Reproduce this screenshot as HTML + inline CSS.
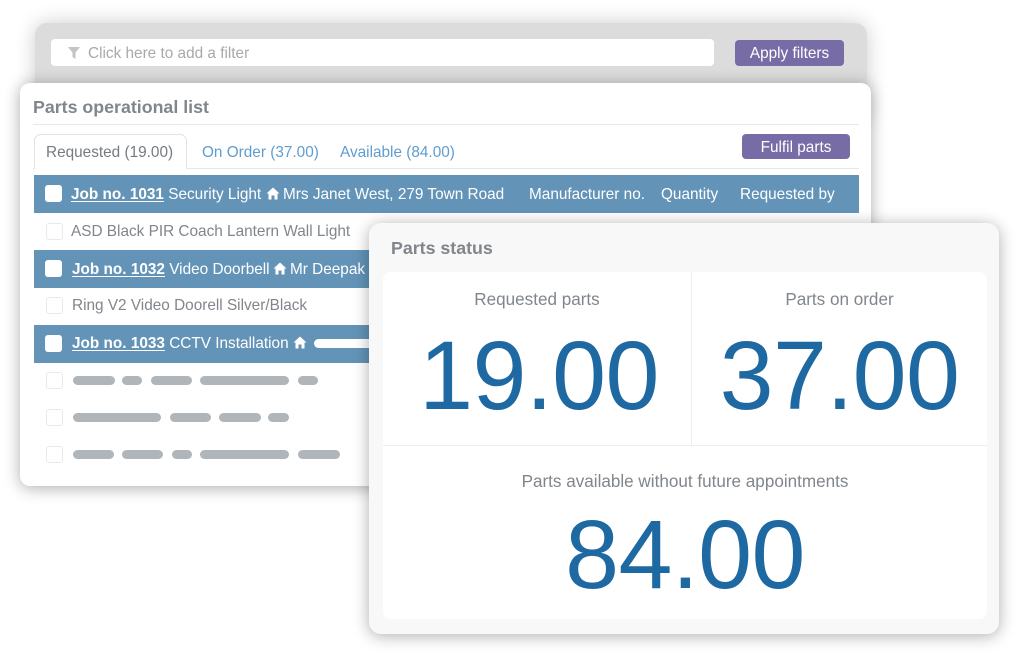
<!DOCTYPE html>
<html><head><meta charset="utf-8"><style>
html,body{margin:0;padding:0;background:#fff}
#r{position:relative;width:1024px;height:658px;overflow:hidden;background:#fff;font-family:"Liberation Sans",sans-serif;filter:blur(.35px)}
#r div,#r svg{position:absolute}
.t{position:absolute;white-space:nowrap;line-height:20px;font-size:15.35px}
.row{left:34px;width:825px;background:#6394b8}
.cb{left:45px;width:17px;height:17px;background:#fff;border-radius:3px}
.cbo{left:45.5px;width:15px;height:15px;background:#fff;border:1px solid #e8e9ea;border-radius:3px}
.w{color:#fff}.g{color:#80868c}
.bar{height:9px;background:#b0b5b9;border-radius:5px}
.btn{background:#786ca6;border-radius:4px;color:#fff;text-align:center;font-size:15.35px}
.num{color:#1f69a3;font-size:97px;line-height:100px;text-align:center;white-space:nowrap;letter-spacing:-.6px}
.lab{color:#80868c;font-size:17.1px;line-height:20px;text-align:center;white-space:nowrap}
u{text-underline-offset:2px}
</style></head><body><div id="r">

<div style="left:35px;top:23px;width:832px;height:100px;background:#dcdcdc;border-radius:12px;box-shadow:0 0 20px rgba(0,0,0,.2)"></div>
<div style="left:51px;top:39px;width:663px;height:27px;background:#fff;border-radius:4px"></div>
<svg style="left:68px;top:47px" width="12" height="12" viewBox="0 0 12 12"><path d="M0 0H12L7.5 5.5V12L4.5 10V5.5Z" fill="#c4c4c4"/></svg>
<span class="t" style="left:88px;top:44px;color:#a9a9a9">Click here to add a filter</span>
<div class="btn" style="left:735px;top:40px;width:109px;height:26px;line-height:27px">Apply filters</div>

<div style="left:20px;top:83px;width:851px;height:403px;background:#fff;border-radius:10px;box-shadow:0 2px 16px rgba(0,0,0,.32)"></div>
<span class="t" style="left:33px;top:97px;color:#80868c;font-weight:bold;font-size:17.8px">Parts operational list</span>
<div style="left:33px;top:124px;width:826px;height:1px;background:#e6e7e8"></div>
<div style="left:33px;top:168px;width:826px;height:1px;background:#e6e7e8"></div>
<div style="left:34px;top:134px;width:151px;height:34px;background:#fff;border:1px solid #e2e3e4;border-bottom:0;border-radius:7px 7px 0 0"></div>
<span class="t" style="left:46px;top:143px;color:#757b80">Requested (19.00)</span>
<span class="t" style="left:202px;top:143px;color:#5f9dd0">On Order (37.00)</span>
<span class="t" style="left:340px;top:143px;color:#5f9dd0">Available (84.00)</span>
<div class="btn" style="left:742px;top:134px;width:108px;height:25px;line-height:27px">Fulfil parts</div>

<div class="row" style="top:175px;height:38px"></div>
<div class="cb" style="top:185px"></div>
<span class="t w" style="left:71px;top:185px"><b><u>Job no. 1031</u></b> Security Light</span>
<svg style="left:266px;top:187px" width="14" height="13" viewBox="0 0 14 13"><path d="M7 .5L13.5 6.5H11.5V12.5H8.5V8.5H5.5V12.5H2.5V6.5H.5Z" fill="#fff"/></svg>
<span class="t w" style="left:283px;top:185px">Mrs Janet West, 279 Town Road</span>
<span class="t w" style="left:529px;top:185px">Manufacturer no.</span>
<span class="t w" style="left:661px;top:185px">Quantity</span>
<span class="t w" style="left:740px;top:185px">Requested by</span>

<div class="cbo" style="top:223px"></div>
<span class="t g" style="left:71px;top:222px">ASD Black PIR Coach Lantern Wall Light</span>

<div class="row" style="top:250px;height:38px"></div>
<div class="cb" style="top:260px"></div>
<span class="t w" style="left:72px;top:260px"><b><u>Job no. 1032</u></b> Video Doorbell</span>
<svg style="left:273px;top:262px" width="14" height="13" viewBox="0 0 14 13"><path d="M7 .5L13.5 6.5H11.5V12.5H8.5V8.5H5.5V12.5H2.5V6.5H.5Z" fill="#fff"/></svg>
<span class="t w" style="left:290px;top:260px">Mr Deepak</span>

<div class="cbo" style="top:297px"></div>
<span class="t g" style="left:72px;top:296px">Ring V2 Video Doorell Silver/Black</span>

<div class="row" style="top:325px;height:38px"></div>
<div class="cb" style="top:335px"></div>
<span class="t w" style="left:72px;top:334px"><b><u>Job no. 1033</u></b> CCTV Installation</span>
<svg style="left:293px;top:336px" width="14" height="13" viewBox="0 0 14 13"><path d="M7 .5L13.5 6.5H11.5V12.5H8.5V8.5H5.5V12.5H2.5V6.5H.5Z" fill="#fff"/></svg>
<div style="left:314px;top:339px;width:70px;height:9px;background:#fff;border-radius:5px"></div>

<div class="cbo" style="top:372px"></div>
<div class="bar" style="left:73px;top:376px;width:42px"></div>
<div class="bar" style="left:122px;top:376px;width:20px"></div>
<div class="bar" style="left:151px;top:376px;width:41px"></div>
<div class="bar" style="left:200px;top:376px;width:89px"></div>
<div class="bar" style="left:298px;top:376px;width:20px"></div>

<div class="cbo" style="top:409px"></div>
<div class="bar" style="left:73px;top:413px;width:88px"></div>
<div class="bar" style="left:170px;top:413px;width:41px"></div>
<div class="bar" style="left:219px;top:413px;width:42px"></div>
<div class="bar" style="left:268px;top:413px;width:21px"></div>

<div class="cbo" style="top:446px"></div>
<div class="bar" style="left:73px;top:450px;width:41px"></div>
<div class="bar" style="left:122px;top:450px;width:41px"></div>
<div class="bar" style="left:172px;top:450px;width:20px"></div>
<div class="bar" style="left:200px;top:450px;width:89px"></div>
<div class="bar" style="left:298px;top:450px;width:42px"></div>

<div style="left:369px;top:223px;width:630px;height:411px;background:#f8f8f8;border-radius:12px;box-shadow:0 2px 16px rgba(0,0,0,.32)"></div>
<span class="t" style="left:391px;top:238px;color:#80868c;font-weight:bold;font-size:17.8px">Parts status</span>
<div style="left:383px;top:272px;width:604px;height:347px;background:#fff;border-radius:8px"></div>
<div style="left:691px;top:272px;width:1px;height:173px;background:#eeeeee"></div>
<div style="left:383px;top:445px;width:604px;height:1px;background:#eeeeee"></div>
<div class="lab" style="left:383px;top:290px;width:308px">Requested parts</div>
<div class="lab" style="left:692px;top:290px;width:295px">Parts on order</div>
<div class="lab" style="left:383px;top:472px;width:604px">Parts available without future appointments</div>
<div class="num" style="left:383px;top:326px;width:312px">19.00</div>
<div class="num" style="left:692px;top:326px;width:295px">37.00</div>
<div class="num" style="left:383px;top:505px;width:604px">84.00</div>
</div></body></html>
